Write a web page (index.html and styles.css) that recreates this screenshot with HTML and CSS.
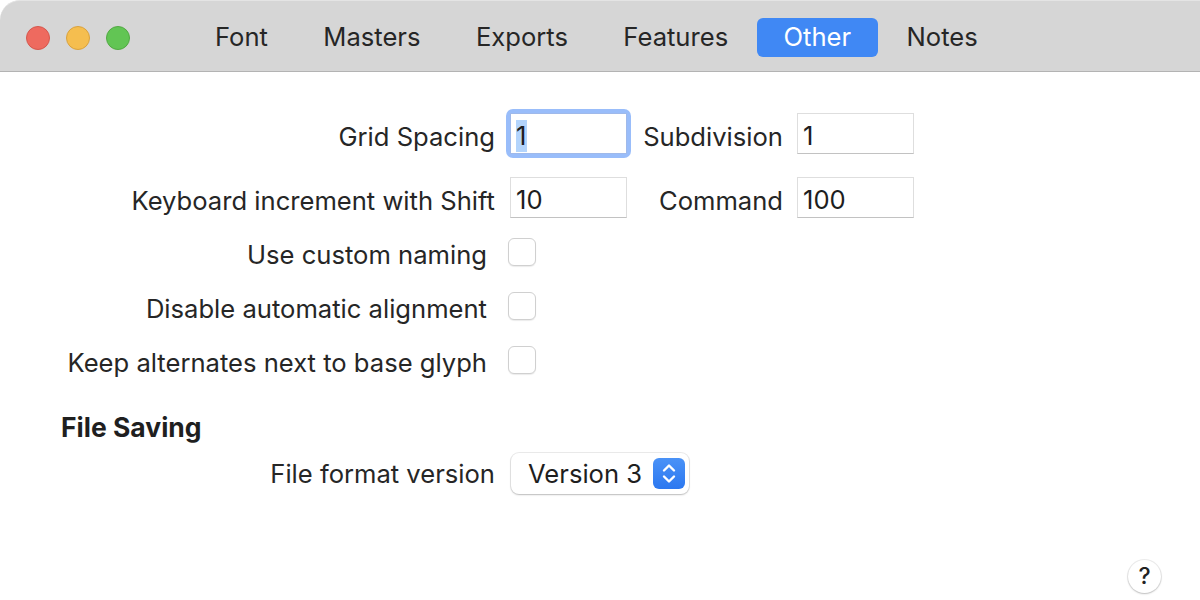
FILE: index.html
```html
<!DOCTYPE html>
<html>
<head>
<meta charset="utf-8">
<link rel="stylesheet" href="styles.css">
</head>
<body>
<div class="window">
  <div class="titlebar">
    <div class="lights">
      <span class="light red"></span>
      <span class="light yellow"></span>
      <span class="light green"></span>
    </div>
    <nav class="tabs">
      <span class="tab">Font</span>
      <span class="tab">Masters</span>
      <span class="tab">Exports</span>
      <span class="tab">Features</span>
      <span class="tab active">Other</span>
      <span class="tab">Notes</span>
    </nav>
  </div>
  <div class="content">
    <div class="row first">
      <label class="label">Grid Spacing</label>
      <div class="focus"><div class="field"><span class="sel">1</span></div></div>
      <label class="label2">Subdivision</label>
      <div class="field">1</div>
    </div>
    <div class="row second">
      <label class="label">Keyboard increment with Shift</label>
      <div class="field">10</div>
      <label class="label2">Command</label>
      <div class="field">100</div>
    </div>
    <div class="row check">
      <label class="label">Use custom naming</label>
      <span class="box"></span>
    </div>
    <div class="row check">
      <label class="label">Disable automatic alignment</label>
      <span class="box"></span>
    </div>
    <div class="row check">
      <label class="label">Keep alternates next to base glyph</label>
      <span class="box"></span>
    </div>
    <h2 class="section">File Saving</h2>
    <div class="row popup-row">
      <label class="label">File format version</label>
      <div class="popup">
        <span class="popup-text">Version 3</span>
        <span class="stepper">
          <svg width="32" height="31" viewBox="0 0 32 31">
            <path d="M11 12.5 L16 7.5 L21 12.5" fill="none" stroke="#fff" stroke-width="2.4" stroke-linecap="round" stroke-linejoin="round"/>
            <path d="M11 18.5 L16 23.5 L21 18.5" fill="none" stroke="#fff" stroke-width="2.4" stroke-linecap="round" stroke-linejoin="round"/>
          </svg>
        </span>
      </div>
    </div>
    <div class="help">?</div>
  </div>
</div>
</body>
</html>
```

FILE: styles.css
```css
* { box-sizing: border-box; }
html, body {
  margin: 0;
  padding: 0;
  background: #ffffff;
}
body {
  font-family: "Inter", "Liberation Sans", sans-serif;
  color: #262626;
  font-size: 25.6px;
}
.window {
  width: 1200px;
  height: 600px;
  display: flex;
  flex-direction: column;
  background: #ffffff;
}
.titlebar {
  height: 72px;
  background: #d6d6d6;
  border-top-left-radius: 20px;
  border-top: 1px solid #e4e4e4;
  border-bottom: 1px solid #b3b3b3;
  display: flex;
  align-items: center;
  flex-shrink: 0;
}
.lights {
  display: flex;
  gap: 16px;
  margin-left: 26px;
  margin-top: 4px;
}
.light {
  width: 24px;
  height: 24px;
  border-radius: 50%;
  display: block;
}
.red { background: #ee6a5f; border: 1px solid #d5574d; }
.yellow { background: #f5be4f; border: 1px solid #d9a23e; }
.green { background: #62c554; border: 1px solid #52a943; }
.tabs {
  display: flex;
  margin-left: 58px;
  margin-top: 3px;
}
.tab {
  padding: 0 27px;
  height: 39px;
  line-height: 38px;
  border-radius: 6px;
  color: #262626;
  font-size: 25.6px;
}
.tab + .tab { margin-left: 1.4px; }
.tab.active {
  background: #4088f4;
  color: #ffffff;
}
.content {
  flex: 1;
  display: flex;
  flex-direction: column;
  padding-top: 41px;
}
.row {
  display: flex;
  align-items: center;
  height: 41px;
}
.row.second { margin-top: 23px; }
.row.check { margin-top: 13px; }
.label {
  width: 495px;
  text-align: right;
  margin-right: 15px;
  padding-top: 5px;
}
.check .label {
  width: 487px;
  margin-right: 21px;
}
.label2 {
  width: 156px;
  text-align: right;
  margin-right: 14px;
  padding-top: 5px;
}
.field {
  width: 117px;
  height: 41px;
  border: 1px solid #dedede;
  border-bottom-color: #c2c2c2;
  background: #fff;
  padding: 4px 0 0 5px;
  line-height: 36px;
  color: #1e1e1e;
}
.focus {
  width: 117px;
  height: 41px;
  border-radius: 3px;
  box-shadow: 0 0 0 4px rgba(70, 135, 245, 0.55);
}
.focus .field {
  border-color: #9fb9ea;
}
.sel {
  background: #b3d4fc;
  display: inline-block;
  line-height: 32px;
  padding-right: 1px;
}
.box {
  width: 28px;
  height: 28px;
  border-radius: 6px;
  border: 1px solid #d0d0d0;
  background: #fff;
  box-shadow: 0 1px 1px rgba(0,0,0,0.08);
  display: block;
}
.section {
  font-size: 26.5px;
  font-weight: 700;
  margin: 31px 0 0 61px;
  line-height: 32px;
  color: #1f1f1f;
}
.popup-row { margin-top: 10px; }
.popup-row .label { padding-top: 0; margin-right: 16px; }
.popup {
  width: 178px;
  height: 41px;
  border-radius: 8px;
  background: #fff;
  box-shadow: 0 0 0 1px rgba(0,0,0,0.08), 0 1px 2px rgba(0,0,0,0.2);
  display: flex;
  align-items: center;
  justify-content: space-between;
  padding: 0 4px 0 17px;
}
.popup-text {
  color: #1e1e1e;
  padding-top: 0;
}
.stepper {
  width: 32px;
  height: 31px;
  border-radius: 6px;
  background: linear-gradient(#4a92f7, #2c78f0);
  display: block;
}
.stepper svg { display: block; }
.help {
  margin-top: auto;
  align-self: flex-end;
  margin-right: 39px;
  margin-bottom: 7px;
  width: 33px;
  height: 33px;
  border-radius: 50%;
  background: #fff;
  box-shadow: 0 0 0 1px rgba(0,0,0,0.07), 0 1px 2px rgba(0,0,0,0.2);
  text-align: center;
  line-height: 33px;
  font-size: 23px;
  font-weight: 500;
  color: #222;
}
```
